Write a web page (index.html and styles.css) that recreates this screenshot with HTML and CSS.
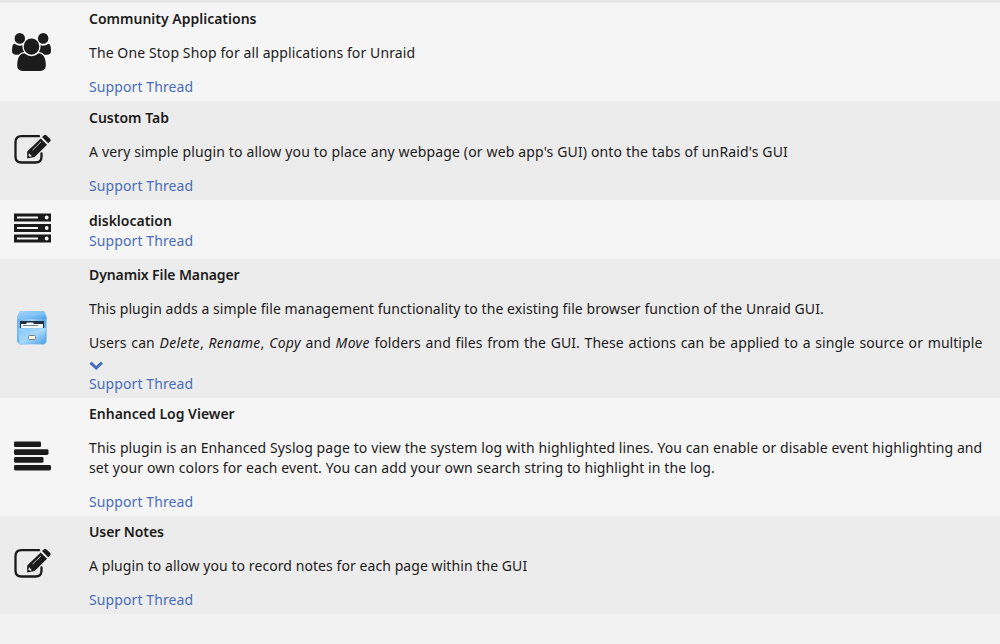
FILE: index.html
```
<!DOCTYPE html>
<html lang="en">
<head>
<meta charset="utf-8">
<title>Plugins</title>
<link rel="stylesheet" href="styles.css">
</head>
<body>
<svg width="0" height="0" class="defs">
  <defs>
    <linearGradient id="front" x1="0" y1="0" x2="1" y2="1"><stop offset="0" stop-color="#7fc3f6"/><stop offset=".5" stop-color="#a5d8fb"/><stop offset="1" stop-color="#4e9fe6"/></linearGradient>
    <linearGradient id="body" x1="0" y1="0" x2="1" y2="0"><stop offset="0" stop-color="#6cb4ee"/><stop offset=".5" stop-color="#9bd0f7"/><stop offset="1" stop-color="#5aa6e6"/></linearGradient>
    <linearGradient id="top" x1="0" y1="0" x2="1" y2="1"><stop offset="0" stop-color="#a4d5fa"/><stop offset=".6" stop-color="#7cc0f4"/><stop offset="1" stop-color="#4c9ee5"/></linearGradient>
    <symbol id="edit" viewBox="0 0 37 31">
      <path d="M25 2.200H7.500Q1.500 2.200 1.500 8.200V22.500Q1.500 28.500 7.500 28.500H21.500Q27.500 28.500 27.500 22.500V19.500" fill="none" stroke="#1c1b1b" stroke-width="2.300" stroke-linecap="round"/>
      <path d="M26.700 4.400L33 10.700L20.700 23L13.200 24.400V17.600ZM28 3.100L29.800 1.400Q31.200.200 32.600 1.400L36 4.800Q37.300 6.100 36 7.500L34.200 9.300Z" fill="#1c1b1b"/>
      <path d="M18.500 16.200L27 7.800" stroke="#ececec" stroke-width=".8"/>
      <path d="M15 19.200L18 22.200L15.800 22.700L14.400 21.400Z" fill="#ececec"/>
    </symbol>
  </defs>
</svg>
<main class="list">
  <article class="row r1">
    <div class="icon"><svg width="39" height="38" viewBox="0 0 1920 1792" preserveAspectRatio="none" fill="#1c1b1b"><path d="M593 896q-162 5-265 128h-134q-82 0-138-40.500t-56-118.500q0-353 124-353 6 0 43.500 21t97.500 42.500 119 21.500q67 0 133-23-5 37-5 66 0 139 81 256zm1071 637q0 120-73 189.500t-194 69.500h-874q-121 0-194-69.500t-73-189.500q0-53 3.500-103.500t14-109 26.500-108.500 43-97.500 62-81 85.500-53.500 111.500-20q10 0 43 21.500t73 48 107 48 135 21.500 135-21.500 107-48 73-48 43-21.500q61 0 111.500 20t85.500 53.500 62 81 43 97.500 26.500 108.500 14 109 3.500 103.500zm-1024-1277q0 106-75 181t-181 75-181-75-75-181 75-181 181-75 181 75 75 181zm704 384q0 159-112.500 271.500t-271.500 112.500-271.500-112.500-112.500-271.500 112.500-271.500 271.500-112.500 271.500 112.500 112.500 271.500zm576 225q0 78-56 118.500t-138 40.500h-134q-103-123-265-128 81-117 81-256 0-29-5-66 66 23 133 23 59 0 119-21.500t97.500-42.500 43.500-21q124 0 124 353zm-128-609q0 106-75 181t-181 75-181-75-75-181 75-181 181-75 181 75 75 181z"/></svg></div>
    <div class="text">
      <h2>Community Applications</h2>
      <p>The One Stop Shop for all applications for Unraid</p>
      <a class="link">Support Thread</a>
    </div>
  </article>
  <article class="row r2">
    <div class="icon"><svg width="37" height="31"><use href="#edit"/></svg></div>
    <div class="text">
      <h2>Custom Tab</h2>
      <p class="loose">A very simple plugin to allow you to place any webpage (or web app's GUI) onto the tabs of unRaid's GUI</p>
      <a class="link">Support Thread</a>
    </div>
  </article>
  <article class="row r3">
    <div class="icon"><svg width="37" height="30" viewBox="0 0 37 30"><path d="M0 .500H37V8.500H0ZM0 11H37V19H0ZM0 21.500H37V29.500H0Z" fill="#1c1b1b"/><path d="M3 3.500H24V5.500H3ZM3 14H24V16H3ZM3 24.500H24V26.500H3Z" fill="#f5f5f5"/><g fill="#f5f5f5"><circle cx="32.700" cy="4.500" r="1.900"/><circle cx="32.700" cy="15" r="1.900"/><circle cx="32.700" cy="25.500" r="1.900"/></g></svg></div>
    <div class="text">
      <h2 class="tight">disklocation</h2>
      <a class="link">Support Thread</a>
    </div>
  </article>
  <article class="row r4">
    <div class="icon"><svg width="32" height="34" viewBox="0 0 32 34"><path d="M4 0H28L30.500 6V31L28 33.500H4L1 31V6Z" fill="url(#body)"/><path d="M4 0H28L31 8H1Z" fill="url(#top)"/><path d="M4 10H28V17H4Z" fill="#1f3040"/><path d="M5 13H10L11 11.500H17L18 13H27V17H5Z" fill="#f2f7fb"/><path d="M7 14.500H22" stroke="#76899b"/><path d="M2 17H30L28.500 33H3.500Z" fill="url(#front)"/><path d="M3 18L16 22L29 18" fill="none" stroke="#b5dffb" stroke-width=".5"/><rect x="12.500" y="24.500" width="7" height="4" rx="1" fill="#f5f2e8" stroke="#7b7f80"/></svg></div>
    <div class="text">
      <h2 class="narrow">Dynamix File Manager</h2>
      <p class="snug">This plugin adds a simple file management functionality to the existing file browser function of the Unraid GUI.</p>
      <p class="clipped">Users can <em>Delete</em>, <em>Rename</em>, <em>Copy</em> and <em>Move</em> folders and files from the GUI. These actions can be applied to a single source or multiple</p>
      <svg class="chevron" width="14" height="9" viewBox="0 0 14 9"><path d="M1.500 1.700L7.200 7L12.900 1.700" fill="none" stroke="#486dba" stroke-width="3"/></svg>
      <a class="link">Support Thread</a>
    </div>
  </article>
  <article class="row r5">
    <div class="icon"><svg width="37" height="30" viewBox="0 0 37 30" fill="#1c1b1b"><rect y=".500" width="27" height="5.600" rx="1.400"/><rect y="8.300" width="34.500" height="5.600" rx="1.400"/><rect y="16.100" width="29.500" height="5.600" rx="1.400"/><rect y="23.900" width="37" height="5.600" rx="1.400"/></svg></div>
    <div class="text">
      <h2>Enhanced Log Viewer</h2>
      <p>This plugin is an Enhanced Syslog page to view the system log with highlighted lines. You can enable or disable event highlighting and<br>set your own colors for each event. You can add your own search string to highlight in the log.</p>
      <a class="link">Support Thread</a>
    </div>
  </article>
  <article class="row r6">
    <div class="icon"><svg width="37" height="31"><use href="#edit"/></svg></div>
    <div class="text">
      <h2 class="narrow">User Notes</h2>
      <p class="snug">A plugin to allow you to record notes for each page within the GUI</p>
      <a class="link">Support Thread</a>
    </div>
  </article>
</main>
</body>
</html>
```
FILE: styles.css
```
body { margin: 0; background: #f2f2f2; color: #1c1b1b; font: 14px/20px "Noto Sans", sans-serif; overflow: hidden; }
.defs { display: block; position: absolute; }
.list { border-top: 3px solid #e8e8e8; }
.row { display: flex; align-items: center; box-sizing: border-box; background: #f5f5f5; }
.row:nth-child(even) { background: #ececec; }
.r1 { height: 98px; }
.r2 { height: 99px; }
.r3 { height: 59px; }
.r4 { height: 139px; }
.r5 { height: 118px; }
.r6 { height: 98px; }
.icon { width: 64px; display: flex; justify-content: center; flex: none; padding-bottom: 3px; }
.r1 .icon { width: 63px; margin-right: 1px; }
.r1 .icon, .r4 .icon { padding-bottom: 1px; }
.icon svg { display: block; }
.text { margin-left: 25px; padding-top: 2px; white-space: nowrap; }
h2 { font-size: 14px; line-height: 20px; font-weight: 600; margin: 0 0 14px; }
h2.tight { margin: 0; }
h2.narrow { letter-spacing: -0.1px; }
p { margin: 0 0 14px; letter-spacing: 0.1px; }
p.loose { letter-spacing: 0.15px; }
p.snug { letter-spacing: 0.07px; }
p.clipped { margin-bottom: 8px; letter-spacing: 0.06px; word-spacing: 1.05px; }
p.clipped em { letter-spacing: 0.3px; }
.chevron { display: block; margin-bottom: 4px; }
.link { display: block; color: #486dba; letter-spacing: 0.1px; }
```
